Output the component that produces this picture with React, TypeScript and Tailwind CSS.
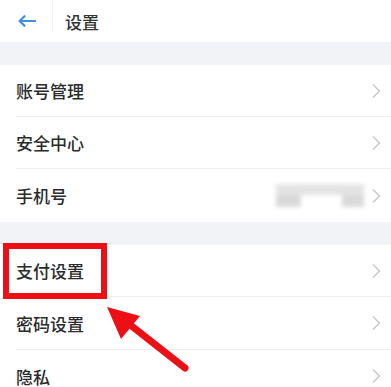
import React from "react";

const Chevron = () => (
  <svg width="10" height="16" viewBox="0 0 10 16" className="shrink-0">
    <polyline points="2,1.5 8.5,8 2,14.5" fill="none" stroke="#c6c6c6" strokeWidth="1.4" />
  </svg>
);

const Row = ({ label, h = "h-[52px]", border = true, extra }: { label: string; h?: string; border?: boolean; extra?: React.ReactNode }) => (
  <div className={`${h} pl-4`}>
    <div className={`h-full flex items-center pr-[10px] ${border ? "border-b border-[#efeff2]" : ""}`}>
      <span className="text-[17px] font-medium text-[#2b2b2b] leading-none">{label}</span>
      <div className="ml-auto flex items-center gap-[7px]">
        {extra}
        <Chevron />
      </div>
    </div>
  </div>
);

const Blur = () => (
  <div className="w-[88px] h-[23px] flex flex-col blur-[2px]">
    <div className="h-[11px] bg-[#e4e4e4]" />
    <div className="flex-1 flex">
      <div className="w-[25px] bg-[#d9d9d9]" />
      <div className="flex-1" />
      <div className="w-[22px] bg-[#dadada]" />
    </div>
  </div>
);

export default function App() {
  return (
    <div className="relative w-[391px] h-[387px] overflow-hidden bg-white" style={{ fontFamily: '"Noto Sans CJK SC", "Noto Sans", sans-serif' }}>
      <div className="h-[42px] flex items-center">
        <div className="w-[52px] pl-[18px] flex items-center">
          <svg width="18" height="12" viewBox="0 0 18 12">
            <path d="M17 6H2M6.5 1.2L1.6 6l4.9 4.8" fill="none" stroke="#3d8fe8" strokeWidth="2.2" strokeLinecap="round" strokeLinejoin="round" />
          </svg>
        </div>
        <div className="w-px h-[32px] self-start bg-[#f0f0f0]" />
        <span className="ml-[12px] text-[17px] font-medium text-[#333] leading-none">设置</span>
      </div>
      <div className="h-[23px] bg-[#f2f3f7]" />
      <Row label="账号管理" />
      <Row label="安全中心" />
      <Row label="手机号" h="h-[53px]" border={false} extra={<Blur />} />
      <div className="h-[23px] bg-[#f2f3f7]" />
      <Row label="支付设置" />
      <Row label="密码设置" h="h-[53px]" />
      <Row label="隐私" border={false} />

      <div className="absolute left-[3px] top-[243px] w-[104px] h-[56px] border-[6px] border-[#ec1016]" />
      <svg className="absolute left-0 top-0" width="391" height="387" viewBox="0 0 391 387">
        <line x1="185" y1="368" x2="124" y2="320" stroke="#ec1016" strokeWidth="7" strokeLinecap="round" />
        <polygon points="107,307 140,316 121,339" fill="#ec1016" />
      </svg>
    </div>
  );
}
